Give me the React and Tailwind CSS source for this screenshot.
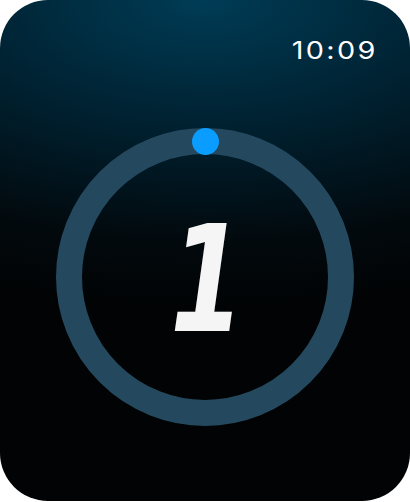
export default function App() {
    return (
        <div className="w-[410px] h-[502px] bg-white">
            <div className="w-[410px] h-[501px] rounded-[48px] overflow-hidden flex flex-col bg-[radial-gradient(ellipse_150%_62%_at_50%_0%,#003c56_0%,#00202f_42%,#02090d_78%,#010304_100%)]">

                <div className="flex justify-end pt-[36px] pr-[32px]">
                    <span className="text-[24px] leading-[30px] tracking-[2px] font-normal text-white font-['Inter',sans-serif] scale-x-[1.2] origin-right">
                        10:09
                    </span>
                </div>

                <div className="relative mx-auto mt-[62px] w-[298px] h-[298px] flex items-center justify-center">
                    <svg className="absolute inset-0" width="298" height="298" viewBox="0 0 298 298">
                        <circle cx="149" cy="149" r="136" fill="none" stroke="#24495f" strokeWidth="26" />
                    </svg>
                    <div className="absolute left-[135.5px] top-[-0.5px] w-[27px] h-[27px] rounded-full bg-[#0a9cff]" />
                    <span className="relative text-[148px] leading-none italic font-bold text-[#f5f5f5] font-['DejaVu_Sans_Condensed','DejaVu_Sans',sans-serif] mt-[6px] ml-[4px] scale-x-[0.8]">
                        1
                    </span>
                </div>

            </div>
        </div>
    )
}
